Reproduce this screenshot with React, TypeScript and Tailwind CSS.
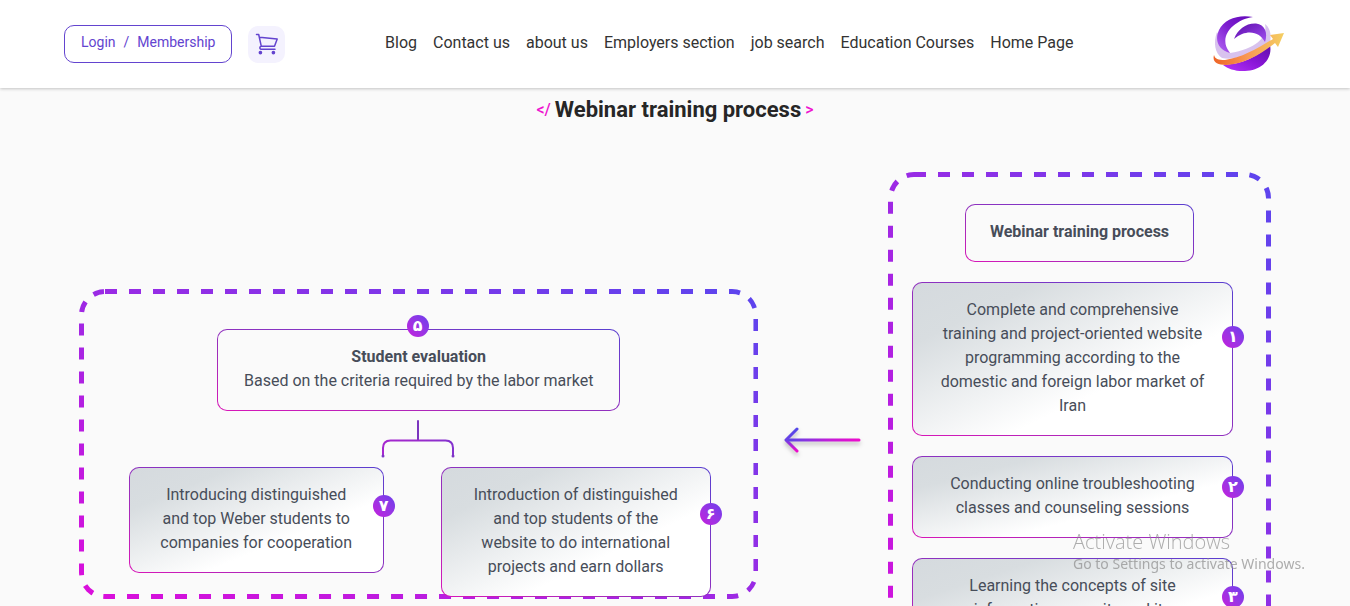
import type { ReactNode } from 'react';

const navItems = [
  'Blog',
  'Contact us',
  'about us',
  'Employers section',
  'job search',
  'Education Courses',
  'Home Page',
];

function DashedFrame({ id }: { id: string }) {
  return (
    <svg className="pointer-events-none absolute inset-0 h-full w-full overflow-hidden rounded-[26px]" aria-hidden="true">
      <defs>
        <linearGradient id={id} x1="0" y1="1" x2="1" y2="0">
          <stop offset="0" stopColor="#dc0edb" />
          <stop offset="1" stopColor="#5b45ee" />
        </linearGradient>
      </defs>
      <rect
        width="100%"
        height="100%"
        rx="26"
        fill="none"
        stroke={`url(#${id})`}
        strokeWidth="10"
        strokeDasharray="12 12"
      />
    </svg>
  );
}

function Badge({ children, place }: { children: ReactNode; place: string }) {
  return (
    <span
      className={`absolute flex size-[22px] items-center justify-center rounded-full bg-linear-to-tr from-[#c516dc] to-[#6a3cec] font-['DejaVu_Sans',sans-serif] text-base leading-none font-bold text-white ${place}`}
    >
      {children}
    </span>
  );
}

const sideBadge = 'top-1/3 -right-3 -mt-2';
const topBadge = '-top-[15px] left-1/2 -ml-3';

function OutlineCard({ children, width = '' }: { children: ReactNode; width?: string }) {
  return (
    <div
      className={`relative rounded-[10px] border border-transparent px-6 pt-[15px] pb-[17px] text-center [background:linear-gradient(#fafafa,#fafafa)_padding-box,linear-gradient(to_top_right,#d916b8,#a02cba_35%,#5a3fd0)_border-box] ${width}`}
    >
      {children}
    </div>
  );
}

function StepCard({ step, children, width = 'w-full' }: { step: string; children: ReactNode; width?: string }) {
  return (
    <div
      className={`relative rounded-[10px] border border-transparent px-[26px] pt-[15px] pb-[17px] text-center [background:linear-gradient(to_bottom_right,#d5dade,#d8dde0_20%,#ffffff_65%)_padding-box,linear-gradient(to_top_right,#d916b8,#a02cba_35%,#5a3fd0)_border-box] ${width}`}
    >
      <p>{children}</p>
      <Badge place={sideBadge}>{step}</Badge>
    </div>
  );
}

function CartIcon() {
  return (
    <svg viewBox="0 0 24 24" className="size-6" fill="none" stroke="#6344cf" strokeWidth="1.5" aria-hidden="true">
      <path d="M1.500 2.500h2.200l2.600 11.800M4.600 5.200l17.600 1.900-2.700 7.200H6.300c-1.600.1-2.100 2.400-.4 3H20" strokeLinejoin="round" strokeLinecap="round" />
      <circle cx="5.400" cy="20.600" r="1.100" fill="#6344cf" />
      <circle cx="18.400" cy="20.600" r="1.100" fill="#6344cf" />
    </svg>
  );
}

function Logo() {
  return (
    <svg viewBox="0 0 72 56" className="h-14 w-[72px]" role="img" aria-label="Home">
      <defs>
        <linearGradient id="logoSweep" x1="0" y1="1" x2="1" y2="0">
          <stop offset="0" stopColor="#b667f5" />
          <stop offset="0.5" stopColor="#7d1fd0" />
          <stop offset="1" stopColor="#6206b8" />
        </linearGradient>
        <linearGradient id="logoInner" x1="0" y1="0" x2="1" y2="1">
          <stop offset="0" stopColor="#5c0bab" />
          <stop offset="1" stopColor="#a04df0" />
        </linearGradient>
        <linearGradient id="logoBase" x1="0" y1="1" x2="1" y2="0">
          <stop offset="0" stopColor="#b733fa" />
          <stop offset="0.5" stopColor="#8a16d8" />
          <stop offset="1" stopColor="#5f0daa" />
        </linearGradient>
        <linearGradient id="logoArrow" x1="0" y1="0" x2="1" y2="0">
          <stop offset="0" stopColor="#ee6427" />
          <stop offset="0.5" stopColor="#f99a55" />
          <stop offset="1" stopColor="#f4cf62" />
        </linearGradient>
      </defs>
      <path d="M4 16C0 27 2 37 9 42 24 45 44 37 57 26 59 17 56 11 52 8 55 22 42 33 17 37Z" fill="#d8c2ee" />
      <path d="M40 1C26-2 11 3 6 14 1 25 6 34 17 37 9 27 12 17 20 10 26 5 32 2 40 1Z" fill="url(#logoSweep)" />
      <path d="M21 23C25 13 33 7 43 7.500 52 8.500 55 17 52 26 47 16 34 12 21 23Z" fill="url(#logoInner)" />
      <path d="M10 49C29 48 44 41 57 29 60 43 48 55 32 55 23 55.500 15 53 10 49Z" fill="url(#logoBase)" />
      <path d="M1 39C-1 46 4 49 13 49 32 48 48 38 62 27l3 4 6-14-14 2 3 4C44 33 28 42 12 44 5 44 2 43 1 39Z" fill="url(#logoArrow)" />
    </svg>
  );
}

function Fork() {
  return (
    <svg viewBox="0 0 74 40" className="my-2 mr-0.5 h-10 w-[74px]" fill="none" strokeWidth="2" strokeLinecap="round" aria-hidden="true">
      <defs>
        <linearGradient id="fork" gradientUnits="userSpaceOnUse" x1="0" y1="38" x2="74" y2="2">
          <stop offset="0" stopColor="#a826d0" />
          <stop offset="0.5" stopColor="#9a2bcb" />
          <stop offset="1" stopColor="#7a35cf" />
        </linearGradient>
      </defs>
      <path d="M37 2V21" stroke="#7b35bf" />
      <path d="M2 37V29Q2 21.500 9.500 21.500H64.500Q72 21.500 72 29V37" stroke="url(#fork)" />
      <circle cx="2" cy="37" r="1.500" fill="#7d37c5" />
      <circle cx="72" cy="37" r="1.500" fill="#7d37c5" />
    </svg>
  );
}

function Arrow() {
  return (
    <svg viewBox="0 0 84 36" className="h-9 w-[84px] drop-shadow-[0_3px_2px_rgba(0,0,0,0.25)]" fill="none" strokeLinecap="round" aria-hidden="true">
      <defs>
        <linearGradient id="shaft" gradientUnits="userSpaceOnUse" x1="4" y1="0" x2="79" y2="0">
          <stop offset="0" stopColor="#5448e8" />
          <stop offset="0.6" stopColor="#c41bd8" />
          <stop offset="1" stopColor="#ee0bcb" />
        </linearGradient>
        <linearGradient id="head" gradientUnits="userSpaceOnUse" x1="0" y1="7" x2="0" y2="29">
          <stop offset="0" stopColor="#5448e8" />
          <stop offset="0.5" stopColor="#6a40e6" />
          <stop offset="1" stopColor="#ee0bcb" />
        </linearGradient>
      </defs>
      <path d="M6 18H78" stroke="url(#shaft)" strokeWidth="3" />
      <path d="M16 7L5 18l11 11" stroke="url(#head)" strokeWidth="3" strokeLinejoin="round" />
    </svg>
  );
}

export default function App() {
  return (
    <div className="relative min-h-screen overflow-hidden bg-[#fafafa] font-[Roboto,sans-serif] text-base text-[#474d59]">
      <header className="relative flex h-22 items-center justify-between bg-white px-16 shadow-[0_1px_3px_rgba(0,0,0,0.22)]">
        <div className="flex items-center gap-4">
          <a href="#login" className="flex h-[38px] items-center gap-2 rounded-[10px] border border-[#6344cf] px-4 pb-1 text-sm text-[#6344cf]">
            <span>Login</span>
            <span>/</span>
            <span>Membership</span>
          </a>
          <button type="button" aria-label="Cart" className="flex size-[37px] items-center justify-center rounded-[10px] bg-[#f4f2fe]">
            <CartIcon />
          </button>
        </div>
        <nav className="mr-10 pb-0.5">
          <ul className="flex gap-4">
            {navItems.map((item) => (
              <li key={item}>
                <a href="#top" className="text-[#333333]">{item}</a>
              </li>
            ))}
          </ul>
        </nav>
        <a href="#home" className="mr-px">
          <Logo />
        </a>
      </header>

      <main className="px-[79px] pb-10">
        <h1 className="flex items-center justify-center gap-1 pt-1 text-[22px] leading-9 font-bold text-[#262626]">
          <span className="text-base font-medium text-[#ee12cf]">&lt;/</span>
          Webinar training process
          <span className="text-base font-medium text-[#ee12cf]">&gt;</span>
        </h1>

        <div className="mt-11 flex items-center">
          <section className="relative flex w-[57%] flex-col items-center pt-10 pb-0.5">
            <DashedFrame id="frameLeft" />
            <OutlineCard width="w-[403px]">
              <h2 className="font-bold">Student evaluation</h2>
              <p>Based on the criteria required by the labor market</p>
              <Badge place={topBadge}>۵</Badge>
            </OutlineCard>
            <Fork />
            <div className="ml-0.5 flex items-start gap-[57px]">
              <StepCard step="۷" width="w-[255px]">
                Introducing distinguished and top Weber students to companies for cooperation
              </StepCard>
              <StepCard step="۶" width="w-[270px]">
                Introduction of distinguished and top students of the website to do international projects and earn dollars
              </StepCard>
            </div>
          </section>

          <div className="mb-2 flex flex-1 justify-center">
            <Arrow />
          </div>

          <section className="relative flex w-[383px] flex-col items-center gap-5 pt-8 pr-[38px] pb-13 pl-6">
            <DashedFrame id="frameRight" />
            <div className="ml-3.5">
              <OutlineCard>
                <h2 className="font-bold">Webinar training process</h2>
              </OutlineCard>
            </div>
            <StepCard step="۱">
              Complete and comprehensive training and project-oriented website programming according to the domestic and foreign labor market of Iran
            </StepCard>
            <StepCard step="۲">Conducting online troubleshooting classes and counseling sessions</StepCard>
            <StepCard step="۳">
              Learning the concepts of site information, security and its implementation in projects
            </StepCard>
          </section>
        </div>
      </main>

      <aside className="pointer-events-none fixed right-[41px] bottom-8 w-[236px] font-['Open_Sans',sans-serif] whitespace-nowrap text-[#8c8c8c]/70">
        <p className="text-xl leading-6 font-light">Activate Windows</p>
        <p className="font-['Noto_Sans',sans-serif] text-sm leading-5">Go to Settings to activate Windows.</p>
      </aside>
    </div>
  );
}
